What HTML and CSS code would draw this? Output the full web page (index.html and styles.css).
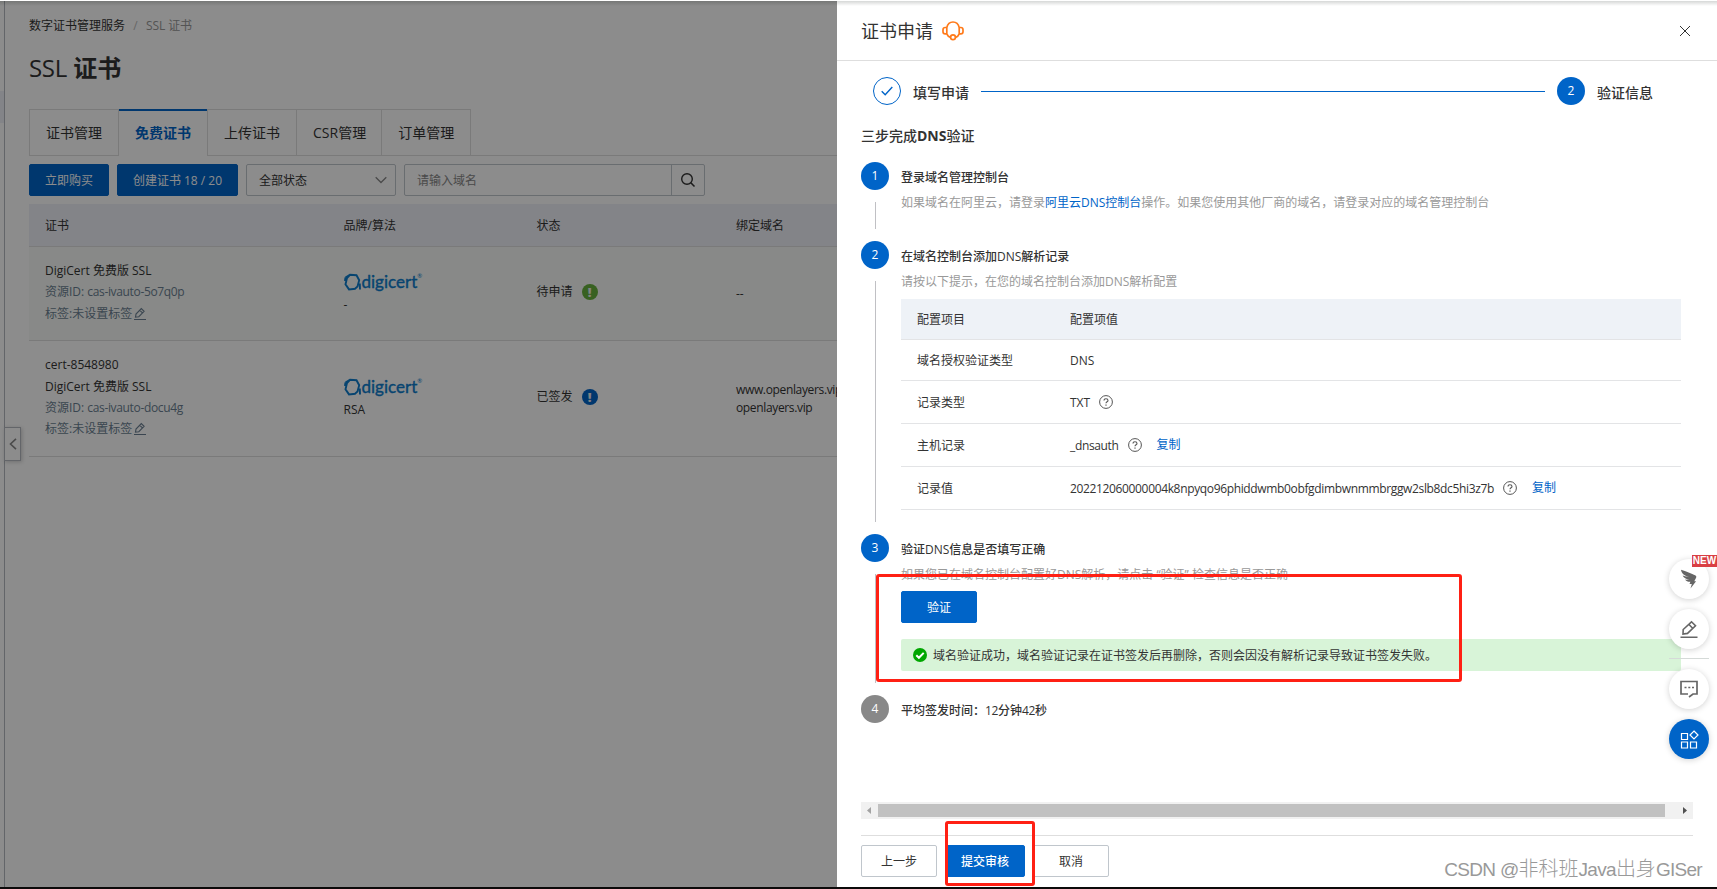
FILE: index.html
```html
<!DOCTYPE html>
<html lang="zh-CN">
<head>
    <meta charset="UTF-8">
    <meta name="viewport" content="width=device-width, initial-scale=1.0">
    <title>SSL 证书 - 数字证书管理服务</title>
    <link rel="stylesheet" href="styles.css">
</head>
<body>
    <svg class="defs" aria-hidden="true">
        <symbol id="icon-help" viewBox="0 0 14 14">
            <circle cx="7" cy="7" r="6.4" fill="none" stroke="currentColor"/>
            <path d="M5 5.6C5 4.4 5.8 3.7 7 3.7s2 .7 2 1.7c0 1.3-2 1.4-2 2.9" fill="none" stroke="currentColor" stroke-width="1.1"/>
            <rect x="6.4" y="9.5" width="1.2" height="1.2" fill="currentColor"/>
        </symbol>
        <symbol id="icon-edit" viewBox="0 0 14 14">
            <path d="M1 12.5h12M2.5 10.2l.5-3.1 5.3-5.5 2.8 2.7-5.3 5.4-3.3.5zM6.8 3.3l2.7 2.6" fill="none" stroke="currentColor" stroke-width="1.1"/>
        </symbol>
        <symbol id="icon-digicert" viewBox="0 0 17 18">
            <path d="M1.500 4.500L6 1.800l6.500.4 2.700 5-1.700 6.300-2.500 2.200M15.800 10.500l.2 6M11.500 15.800l-6.500.6-3.500-5 1.500-6.400 3-3.200M1.500 4.500L.9 8" fill="none" stroke="currentColor" stroke-width="1.900"/>
        </symbol>
    </svg>

    <div class="page">
        <div class="sidebar">
            <div class="sidebar-current"></div>
        </div>
        <div class="main">
            <div class="breadcrumb">
                <span>数字证书管理服务</span>
                <span class="slash">/</span>
                <span class="current">SSL 证书</span>
            </div>
            <h1><span>SSL</span> 证书</h1>

            <div class="tabs">
                <div class="tab">证书管理</div>
                <div class="tab active">免费证书</div>
                <div class="tab">上传证书</div>
                <div class="tab csr">CSR管理</div>
                <div class="tab">订单管理</div>
                <div class="tab-rest"></div>
            </div>

            <div class="toolbar">
                <button class="btn primary">立即购买</button>
                <button class="btn primary create">创建证书 18 / 20</button>
                <div class="select">
                    <span>全部状态</span>
                    <svg width="12" height="8" viewBox="0 0 12 8"><path d="M.7 1.200L6 6.500l5.300-5.300" fill="none" stroke="#888" stroke-width="1.300"/></svg>
                </div>
                <div class="search">
                    <span>请输入域名</span>
                    <div class="search-btn">
                        <svg width="16" height="16" viewBox="0 0 16 16"><circle cx="7" cy="7" r="5.300" fill="none" stroke="#333" stroke-width="1.400"/><path d="M10.800 10.800l3.700 3.700" stroke="#333" stroke-width="1.600"/></svg>
                    </div>
                </div>
            </div>

            <div class="cert-table">
                <div class="cert-row cert-head">
                    <div>证书</div>
                    <div>品牌/算法</div>
                    <div>状态</div>
                    <div>绑定域名</div>
                </div>
                <div class="cert-row first">
                    <div class="cert-info">
                        <p>DigiCert 免费版 SSL</p>
                        <p class="sub">资源ID: <span class="latin">cas-ivauto-5o7q0p</span></p>
                        <p class="sub">标签:未设置标签<svg class="edit"><use href="#icon-edit"/></svg></p>
                    </div>
                    <div class="brand">
                        <div class="logo"><svg width="17" height="18"><use href="#icon-digicert"/></svg><span>digicert</span><sup>®</sup></div>
                        <p>-</p>
                    </div>
                    <div class="status">待申请<i class="mark green">!</i></div>
                    <div class="domain">--</div>
                </div>
                <div class="cert-row second">
                    <div class="cert-info">
                        <p>cert-8548980</p>
                        <p>DigiCert 免费版 SSL</p>
                        <p class="sub">资源ID: <span class="latin">cas-ivauto-docu4g</span></p>
                        <p class="sub">标签:未设置标签<svg class="edit"><use href="#icon-edit"/></svg></p>
                    </div>
                    <div class="brand">
                        <div class="logo"><svg width="17" height="18"><use href="#icon-digicert"/></svg><span>digicert</span><sup>®</sup></div>
                        <p>RSA</p>
                    </div>
                    <div class="status">已签发<i class="mark blue">!</i></div>
                    <div class="domain latin">www.openlayers.vip<br>openlayers.vip</div>
                </div>
            </div>
        </div>
        <div class="collapse">
            <svg width="8" height="12" viewBox="0 0 8 12"><path d="M7 .8L1.500 6 7 11.200" fill="none" stroke="#888" stroke-width="1.600"/></svg>
        </div>
    </div>

    <div class="mask"></div>

    <div class="drawer">
        <div class="drawer-header">
            <h2>证书申请</h2>
            <svg class="service" width="22" height="20" viewBox="0 0 22 20" fill="none" stroke="#ff7a1a" stroke-width="1.700">
                <path d="M4.800 6.500C5.600 3 8 1 11 1s5.400 2 6.200 5.500M4.800 6.500H3.200C1.800 6.500 1 7.500 1 8.700v2c0 1.300.8 2.200 2.200 2.200h1.600zM17.200 6.500h1.600c1.400 0 2.200 1 2.200 2.200v2c0 1.300-.8 2.200-2.200 2.200h-1.600zM4.800 12.900c.7 1.800 2 3 3.700 3.500M17.200 12.900c-.7 1.800-1.800 2.900-3.600 3.600"/>
                <circle cx="11" cy="16.300" r="2.400"/>
            </svg>
            <svg class="close" width="12" height="12" viewBox="0 0 12 12"><path d="M1 1l10 10M11 1L1 11" stroke="#333" stroke-width="1"/></svg>
        </div>

        <div class="drawer-body">
            <div class="steps">
                <div class="circle done">
                    <svg width="12" height="10" viewBox="0 0 12 10"><path d="M.7 5.200l3.500 3.500L11.300 1" fill="none" stroke="#0064c8" stroke-width="1.400"/></svg>
                </div>
                <b>填写申请</b>
                <div class="steps-line"></div>
                <div class="circle">2</div>
                <b>验证信息</b>
            </div>

            <h3>三步完成<span>DNS</span>验证</h3>

            <div class="step step-1">
                <div class="step-side">
                    <div class="circle">1</div>
                    <div class="tail"></div>
                </div>
                <div class="step-content">
                    <h4>登录域名管理控制台</h4>
                    <p class="desc">如果域名在阿里云，请登录<a>阿里云DNS控制台</a>操作。如果您使用其他厂商的域名，请登录对应的域名管理控制台</p>
                </div>
            </div>

            <div class="step step-2">
                <div class="step-side">
                    <div class="circle">2</div>
                    <div class="tail"></div>
                </div>
                <div class="step-content">
                    <h4>在域名控制台添加DNS解析记录</h4>
                    <p class="desc">请按以下提示，在您的域名控制台添加DNS解析配置</p>
                    <div class="config">
                        <div class="config-row config-head"><span>配置项目</span><span>配置项值</span></div>
                        <div class="config-row type"><span>域名授权验证类型</span><span>DNS</span></div>
                        <div class="config-row"><span>记录类型</span><span>TXT</span><svg class="help"><use href="#icon-help"/></svg></div>
                        <div class="config-row"><span>主机记录</span><span class="latin">_dnsauth</span><svg class="help"><use href="#icon-help"/></svg><a>复制</a></div>
                        <div class="config-row"><span>记录值</span><span class="latin">202212060000004k8npyqo96phiddwmb0obfgdimbwnmmbrggw2slb8dc5hi3z7b</span><svg class="help"><use href="#icon-help"/></svg><a>复制</a></div>
                    </div>
                </div>
            </div>

            <div class="step step-3">
                <div class="step-side">
                    <div class="circle">3</div>
                    <div class="tail"></div>
                </div>
                <div class="step-content">
                    <h4>验证DNS信息是否填写正确</h4>
                    <p class="desc">如果您已在域名控制台配置好DNS解析，请点击 “验证” 检查信息是否正确</p>
                    <button class="btn primary verify">验证</button>
                    <div class="alert">
                        <svg width="14" height="14" viewBox="0 0 14 14"><circle cx="7" cy="7" r="7" fill="#00a700"/><path d="M3.300 7.200l2.600 2.600 4.800-4.900" fill="none" stroke="#fff" stroke-width="2"/></svg>
                        <span>域名验证成功，域名验证记录在证书签发后再删除，否则会因没有解析记录导致证书签发失败。</span>
                    </div>
                </div>
            </div>

            <div class="step">
                <div class="step-side">
                    <div class="circle gray">4</div>
                </div>
                <div class="step-content">
                    <h4>平均签发时间：<span class="latin">12</span>分钟<span class="latin">42</span>秒</h4>
                </div>
            </div>
        </div>

        <div class="scrollbar">
            <svg width="17" height="17"><path d="M10 5v7L6 8.500z" fill="#a3a3a3"/></svg>
            <div class="thumb"></div>
            <svg width="17" height="17"><path d="M7 5v7l4-3.500z" fill="#505050"/></svg>
        </div>
        <div class="drawer-footer">
            <button class="btn">上一步</button>
            <button class="btn primary submit">提交审核</button>
            <button class="btn">取消</button>
        </div>
    </div>

    <div class="float-bar">
        <div class="float-btn">
            <svg width="18" height="20" viewBox="0 0 18 20"><path d="M1 .8c5 1.800 10.500 3.700 14.500 5.700.9.500 1 1.300.6 2.200l-1.800 3.500h1.800L10.500 19.500l1.300-4.500H9.500l.9-2.200c-2.200.2-4.400-.7-5.300-2.400 1.700.5 3 .5 4.300.4C6.400 10.300 3.400 9 2.600 6.600c2.200.9 4.700 1.500 6.900 1.700C5.600 7.100 1.400 5 1 .8z" fill="#666"/></svg>
            <span class="new">NEW</span>
        </div>
        <div class="float-btn">
            <svg width="18" height="19" viewBox="0 0 18 19" fill="none" stroke="#666" stroke-width="1.600"><path d="M.5 17.300h17M3 14l.2-4.500 8.300-7.700 4 4-8 7.600zM9 4.500l3.900 4"/></svg>
        </div>
        <div class="float-split"></div>
        <div class="float-btn">
            <svg width="18" height="18" viewBox="0 0 18 18"><path d="M8 14H1V1.500h16V14h-4l-4 3" fill="none" stroke="#666" stroke-width="1.700"/><path d="M4.500 7.500h2M8.300 7.500h2M12 7.500h2" stroke="#666" stroke-width="1.700"/></svg>
        </div>
        <div class="float-btn blue">
            <svg width="19" height="19" viewBox="0 0 19 19" fill="none" stroke="#fff" stroke-width="1.200"><path d="M1.500 3.500h6v6h-6zM1.500 12h6v6h-6zM10.500 12h6v6h-6zM14 1l4 4-4 4-4-4z"/></svg>
        </div>
    </div>

    <div class="highlight highlight-verify"></div>
    <div class="highlight highlight-submit"></div>
    <div class="watermark"><span>CSDN @</span>非科班<span>Java</span>出身<span>GISer</span></div>
    <div class="top-edge"></div>
    <div class="bottom-edge"></div>
</body>
</html>
```
FILE: styles.css
```css
* {
    box-sizing: border-box;
}

body {
    margin: 0;
    position: relative;
    width: 1717px;
    height: 889px;
    overflow: hidden;
    font-family: "Open Sans", "Noto Sans CJK SC", sans-serif;
    font-size: 12px;
    line-height: 18px;
    color: #333;
    background: #fff;
}

h1, h2, h3, h4, p {
    margin: 0;
}

a {
    color: #0064c8;
}

.defs {
    display: none;
}

.latin {
    letter-spacing: -0.35px;
}

/* ---- page under the mask ---- */
.page {
    display: flex;
    height: 889px;
    position: relative;
}

.sidebar {
    width: 5px;
    border-right: 1px solid #b4b8bf;
    padding-top: 91px;
}

.sidebar-current {
    height: 32px;
    background: #eff1f8;
}

.main {
    flex: 1;
    padding: 17px 0 0 24px;
}

.breadcrumb {
    display: flex;
    height: 18px;
}

.breadcrumb .slash {
    width: 21px;
    text-align: center;
    color: #bbb;
}

.breadcrumb .current {
    color: #999;
    letter-spacing: -0.1px;
}

h1 {
    margin-top: 17px;
    font-size: 24px;
    line-height: 32px;
    font-weight: 700;
}

h1 span {
    font-weight: 500;
    letter-spacing: -0.3px;
}

.tabs {
    display: flex;
    margin-top: 25px;
    height: 47px;
    font-size: 14px;
}

.tab {
    padding: 0 16px;
    line-height: 46px;
    border: 1px solid #dedede;
    border-right: none;
    white-space: nowrap;
}

.tab.active {
    border: none;
    border-top: 2px solid #0064c8;
    line-height: 44px;
    color: #0064c8;
    font-weight: 700;
}

.tab.csr {
    padding-right: 15px;
}

.tab:first-child {
    border-right: 1px solid #dedede;
}

.tab-rest {
    flex: 1;
    border-left: 1px solid #dedede;
    border-bottom: 1px solid #dedede;
}

.toolbar {
    display: flex;
    gap: 8px;
    margin-top: 8px;
}

.btn {
    height: 32px;
    padding: 1px 0 0;
    width: 76px;
    border: 1px solid #c0c6cc;
    border-radius: 2px;
    background: #fff;
    color: #333;
    font-family: inherit;
    font-size: 12px;
    line-height: 29px;
}

.btn.primary {
    border-color: #0064c8;
    background: #0064c8;
    color: #fff;
}

.toolbar .btn {
    width: 80px;
}

.toolbar .create {
    width: 121px;
}

.select, .search {
    display: flex;
    align-items: center;
    justify-content: space-between;
    height: 32px;
    border: 1px solid #c0c6cc;
    border-radius: 2px;
}

.select > span, .search > span {
    padding-top: 2px;
}

.select {
    width: 150px;
    padding: 0 8px 0 12px;
}

.search {
    width: 301px;
    padding-left: 12px;
    color: #888;
}

.search-btn {
    display: flex;
    align-items: center;
    justify-content: center;
    width: 33px;
    height: 30px;
    border-left: 1px solid #c0c6cc;
}

.cert-table {
    margin-top: 8px;
}

.cert-row {
    display: grid;
    grid-template-columns: 298.5px 193px 199.5px 1fr;
    align-items: center;
    border-bottom: 1px solid #dedede;
}

.cert-row > div {
    padding-left: 16px;
}

.cert-head {
    height: 43px;
    padding-top: 2px;
    background: #eff1f8;
}

.cert-row.first {
    height: 94px;
    background: #f7faf7;
}

.cert-row.second {
    height: 116px;
}

.cert-info p {
    line-height: 21.4px;
}

.cert-info {
    padding-bottom: 3px;
}

.sub {
    color: #6b7f92;
}

.edit {
    width: 14px;
    height: 14px;
    margin-left: 1px;
    vertical-align: -3px;
}

.brand p {
    margin-top: 4px;
}

.logo {
    display: flex;
    height: 19px;
    line-height: 17px;
    font-family: Lato, sans-serif;
    font-size: 17px;
    color: #0d7dcd;
}

.logo span {
    margin-left: 1px;
    font-weight: 400;
    -webkit-text-stroke: 0.4px #0d7dcd;
}

.logo sup {
    font-size: 6px;
    line-height: 6px;
}

.status {
    display: flex;
    align-items: center;
    padding-bottom: 3px;
}

.domain {
    padding-top: 1px;
}

.mark {
    width: 16px;
    height: 16px;
    margin-left: 9px;
    border-radius: 50%;
    text-align: center;
    line-height: 16px;
    font-style: normal;
    font-weight: 800;
    font-size: 13px;
    color: #eee;
}

.mark.green {
    background: #67b13d;
}

.mark.blue {
    background: #0064c8;
}

.collapse {
    position: absolute;
    left: 4px;
    top: 427px;
    display: flex;
    align-items: center;
    justify-content: center;
    width: 17px;
    height: 34px;
    border: 1px solid #b4b8bf;
    background: #fff;
    box-shadow: 1px 1px 4px rgba(0, 0, 0, 0.2);
}

.mask {
    position: absolute;
    inset: 0;
    background: rgba(0, 0, 0, 0.45);
}

/* ---- drawer ---- */
.drawer {
    position: absolute;
    top: 0;
    right: 0;
    bottom: 0;
    display: flex;
    flex-direction: column;
    width: 880px;
    background: #fff;
}

.drawer-header {
    display: flex;
    align-items: center;
    height: 61px;
    padding: 1px 26px 0 24px;
    border-bottom: 1px solid #dedede;
}

h2 {
    font-size: 18px;
    font-weight: 400;
    line-height: 28px;
}

.service {
    margin-left: 9px;
}

.close {
    margin-left: auto;
}

.drawer-body {
    flex: 1;
    padding: 16px 36px 0 24px;
}

.steps {
    display: flex;
    align-items: center;
    padding: 0 28px 0 12px;
    font-size: 14px;
    height: 28px;
}

.steps b {
    margin-left: 12px;
    line-height: 20px;
    padding-top: 3px;
    font-weight: 500;
}

.steps-line {
    flex: 1;
    height: 1px;
    margin: 0 12px;
    background: #0064c8;
}

.circle {
    display: flex;
    align-items: center;
    justify-content: center;
    flex: none;
    width: 28px;
    height: 28px;
    border-radius: 50%;
    background: #0064c8;
    color: #fff;
    font-size: 12px;
}

.circle.done {
    border: 1px solid #0064c8;
    background: #fff;
}

.circle.gray {
    background: #888;
}

h3 {
    margin: 21px 0 16px;
    font-size: 14px;
    font-weight: 500;
    line-height: 20px;
}

h3 span {
    font-weight: 700;
}

.step {
    display: flex;
    gap: 12px;
}

.step-1 {
    height: 79px;
}

.step-2 {
    height: 293px;
}

.step-3 {
    height: 161px;
}

.step-side {
    display: flex;
    flex-direction: column;
    align-items: center;
    width: 28px;
}

.tail {
    flex: 1;
    width: 1px;
    margin: 12px 0;
    background: #c0c0c4;
}

.step-content {
    flex: 1;
}

h4 {
    padding-top: 7px;
    font-size: 12px;
    font-weight: 500;
    line-height: 18px;
}

.desc {
    margin-top: 7px;
    color: #999;
}

.config {
    margin-top: 8px;
}

.config-row {
    display: flex;
    align-items: center;
    height: 43px;
    border-bottom: 1px solid #e3e4e6;
}

.config-row span {
    padding-top: 2px;
}

.config-row span:first-child {
    width: 169px;
    padding-left: 16px;
}

.config-head {
    height: 41px;
    background: #eef2f7;
}

.config-row.type {
    height: 41px;
}

.help {
    width: 14px;
    height: 14px;
    margin-left: 9px;
    color: #555;
}

.config-row a {
    margin-left: 15px;
}

.verify {
    display: block;
    margin-top: 7px;
}

.alert {
    display: flex;
    align-items: center;
    gap: 6px;
    height: 32px;
    margin-top: 16px;
    padding-left: 12px;
    border-radius: 2px;
    background: #d8f4d8;
}

.alert span {
    padding-top: 2px;
}

.scrollbar {
    display: flex;
    align-items: center;
    height: 17px;
    margin: 0 24px;
    background: #f1f1f1;
}

.thumb {
    width: 787px;
    height: 13px;
    margin-right: 11px;
    background: #c1c1c1;
}

.drawer-footer {
    display: flex;
    gap: 8px;
    height: 54px;
    margin: 16px 24px 0;
    padding-top: 9px;
    border-top: 1px solid #dedede;
}

.submit {
    width: 80px;
    font-weight: 500;
}

/* ---- floating toolbar ---- */
.float-bar {
    position: absolute;
    right: 8px;
    top: 559px;
    display: flex;
    flex-direction: column;
    gap: 10px;
}

.float-btn {
    position: relative;
    display: flex;
    align-items: center;
    justify-content: center;
    width: 40px;
    height: 40px;
    border-radius: 50%;
    background: #fff;
    box-shadow: 0 1px 6px rgba(0, 0, 0, 0.18);
}

.float-btn.blue {
    background: #0064c8;
}

.float-split {
    height: 1px;
    margin: -1px 0 0;
    background: #d5dad8;
}

.new {
    position: absolute;
    left: 23px;
    top: -4px;
    width: 25px;
    height: 12px;
    background: #d93f44;
    color: #fff;
    font: bold 10px/12px "Liberation Sans", sans-serif;
    text-align: center;
}

/* ---- annotations on top ---- */
.highlight {
    position: absolute;
    border: 3px solid #ff2014;
    border-radius: 3px;
}

.highlight-verify {
    left: 876px;
    top: 574px;
    width: 586px;
    height: 108px;
}

.highlight-submit {
    left: 945px;
    top: 821px;
    width: 90px;
    height: 65px;
}

.watermark {
    position: absolute;
    right: 15px;
    bottom: 7px;
    font: 300 20px/24px "Liberation Sans", "Noto Sans CJK SC", sans-serif;
    color: #999;
    text-shadow: 1px 1px 0 #fff;
    white-space: nowrap;
}

.watermark span {
    font-size: 19px;
    letter-spacing: -0.7px;
}

.top-edge {
    position: absolute;
    top: 0;
    left: 0;
    right: 0;
    height: 6px;
    border-top: 1px solid #fff;
    background: linear-gradient(rgba(0, 10, 5, 0.16), rgba(0, 10, 5, 0));
}

.bottom-edge {
    position: absolute;
    bottom: 0;
    left: 0;
    right: 0;
    height: 2px;
    background: #0c0a0a;
}
```
